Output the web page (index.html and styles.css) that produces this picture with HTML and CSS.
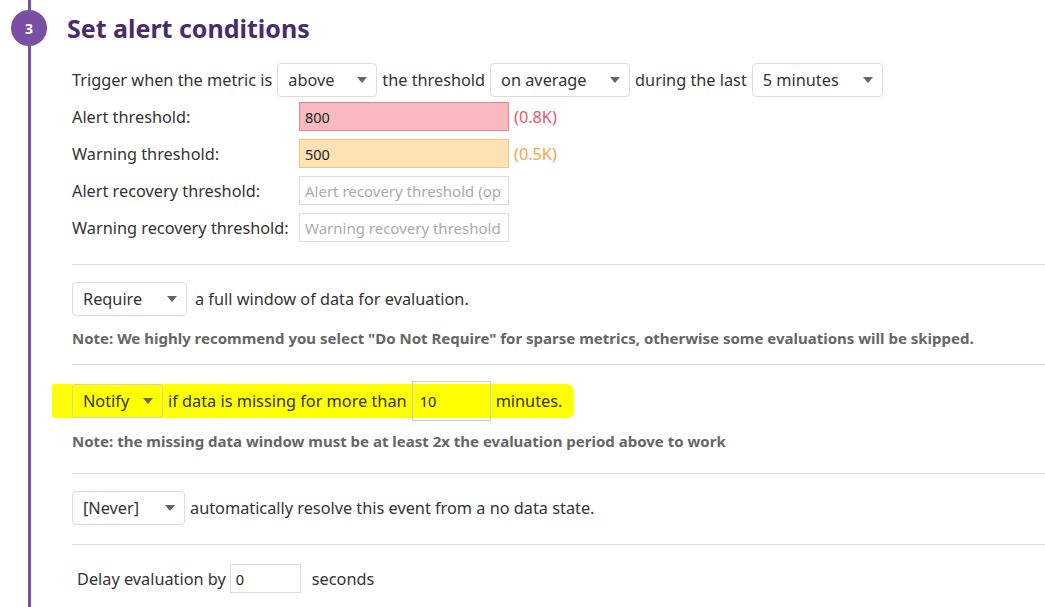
FILE: index.html
```html
<!DOCTYPE html>
<html>
<head>
<meta charset="utf-8">
<link rel="stylesheet" href="styles.css">
</head>
<body>
<div class="step">
  <div class="rail">
    <div class="line line-top"></div>
    <div class="badge">3</div>
    <div class="line line-rest"></div>
  </div>
  <div class="main">
    <div class="header"><h2 class="title">Set alert conditions</h2></div>

    <div class="content">
      <div class="row trigger">
        <span>Trigger when the metric is</span>
        <div class="select w-above"><span>above</span><i class="caret"></i></div>
        <span>the threshold</span>
        <div class="select w-avg"><span>on average</span><i class="caret"></i></div>
        <span>during the last</span>
        <div class="select w-min"><span>5 minutes</span><i class="caret"></i></div>
      </div>

      <div class="thresholds">
        <div class="trow">
          <label class="tlabel">Alert threshold:</label>
          <div class="input alert">800</div>
          <span class="hint alert-hint">(0.8K)</span>
        </div>
        <div class="trow">
          <label class="tlabel">Warning threshold:</label>
          <div class="input warn">500</div>
          <span class="hint warn-hint">(0.5K)</span>
        </div>
        <div class="trow">
          <label class="tlabel">Alert recovery threshold:</label>
          <div class="input empty"><span class="ph">Alert recovery threshold (optional)</span></div>
        </div>
        <div class="trow">
          <label class="tlabel">Warning recovery threshold:</label>
          <div class="input empty"><span class="ph">Warning recovery threshold (optional)</span></div>
        </div>
      </div>

      <div class="section s-require">
        <div class="row">
          <div class="select w-require"><span>Require</span><i class="caret"></i></div>
          <span class="after-wide">a full window of data for evaluation.</span>
        </div>
        <p class="note note1">Note: We highly recommend you select "Do Not Require" for sparse metrics, otherwise some evaluations will be skipped.</p>
      </div>

      <div class="section s-notify">
        <div class="highlight">
          <div class="select w-notify clear"><span>Notify</span><i class="caret"></i></div>
          <span>if data is missing for more than</span>
          <div class="input minutes">10</div>
          <span>minutes.</span>
        </div>
        <p class="note note2">Note: the missing data window must be at least 2x the evaluation period above to work</p>
      </div>

      <div class="section s-never">
        <div class="row">
          <div class="select w-never"><span>[Never]</span><i class="caret"></i></div>
          <span>automatically resolve this event from a no data state.</span>
        </div>
      </div>

      <div class="section s-delay">
        <div class="row delay">
          <span>Delay evaluation by</span>
          <div class="input delay-input">0</div>
          <span class="seconds">seconds</span>
        </div>
      </div>
    </div>
  </div>
</div>
</body>
</html>
```

FILE: styles.css
```css
* { box-sizing: border-box; }
html, body {
  margin: 0;
  padding: 0;
  background: #ffffff;
  height: 607px;
  overflow: hidden;
}
body {
  font-family: "Noto Sans", "Open Sans", sans-serif;
  font-size: 16.3px;
  color: #333333;
}
.step {
  display: grid;
  grid-template-columns: 58px 1fr;
  min-height: 607px;
}
.rail {
  display: flex;
  flex-direction: column;
  align-items: center;
  width: 36px;
  margin-left: 11px;
}
.line {
  width: 3px;
  background: #7a4ea3;
}
.line-top { height: 10px; }
.line-rest { flex: 1; }
.badge {
  width: 36px;
  height: 36px;
  border-radius: 50%;
  background: #7a4ea3;
  color: #ffffff;
  font-weight: 700;
  font-size: 14px;
  display: flex;
  align-items: center;
  justify-content: center;
}
.main { min-width: 0; }
.header {
  height: 56px;
  display: flex;
  align-items: center;
  padding-left: 9px;
}
.title {
  margin: 0;
  font-size: 25px;
  font-weight: 700;
  color: #4a2c6c;
  line-height: 1;
}
.content {
  padding-left: 14px;
  padding-top: 7px;
}
.row {
  display: flex;
  align-items: center;
  gap: 5px;
  white-space: nowrap;
}
.select {
  height: 34px;
  border: 1px solid #dddddd;
  border-radius: 4px;
  background: #ffffff;
  display: flex;
  align-items: center;
  justify-content: space-between;
  padding: 0 9px 0 10px;
  color: #333333;
  flex: none;
}
.select.clear { background: transparent; border-color: #d6d6a0; }
.caret {
  width: 0;
  height: 0;
  border-left: 5.5px solid transparent;
  border-right: 5.5px solid transparent;
  border-top: 6px solid #666666;
}
.w-above { width: 100px; }
.w-avg { width: 140px; }
.w-min { width: 131px; }
.w-require { width: 115px; }
.w-notify { width: 91px; }
.w-never { width: 113px; }
.after-wide { margin-left: 3px; }

.thresholds {
  margin-top: 5px;
  display: flex;
  flex-direction: column;
  gap: 8px;
}
.trow {
  display: flex;
  align-items: center;
  height: 29px;
}
.tlabel { width: 227px; flex: none; }
.input {
  height: 29px;
  width: 210px;
  border: 1px solid #dddddd;
  font-size: 14.5px;
  padding: 0 5px;
  display: flex;
  align-items: center;
  overflow: hidden;
  white-space: nowrap;
  color: #222222;
  flex: none;
}
.input.empty { font-size: 15px; padding-right: 6px; }
.input.alert { background: #f8b9c0; border-color: #e8848f; }
.input.warn { background: #fde3b4; border-color: #f4c57a; }
.ph {
  color: #ababab;
  display: block;
  flex: 1;
  min-width: 0;
  overflow: hidden;
}
.hint { margin-left: 5px; }
.alert-hint { color: #e4566a; }
.warn-hint { color: #f5a640; }

.section {
  border-top: 1px solid #dddddd;
}
.s-require {
  margin-top: 22px;
  padding-top: 17px;
}
.note {
  margin: 0;
  font-size: 15px;
  font-weight: 700;
  color: #666666;
  line-height: 20px;
  white-space: nowrap;
}
.note1 { margin-top: 12px; padding-bottom: 16px; }
.s-notify { padding-top: 19px; }
.highlight {
  display: inline-flex;
  align-items: center;
  gap: 5px;
  height: 34px;
  margin-left: -20px;
  padding: 0 12px 0 20px;
  background: #ffff00;
  border-radius: 3px 8px 6px 2px;
  white-space: nowrap;
}
.input.minutes {
  width: 79px;
  height: 40px;
  margin: -3px 0;
  background: transparent;
  border-color: #cccccc;
  padding-left: 7px;
}
.note2 { margin-top: 13px; padding-bottom: 22px; }
.s-never { padding-top: 17px; padding-bottom: 19px; }
.s-delay { padding-top: 19px; }
.delay { padding-left: 5px; gap: 4px; }
.delay-input { width: 71px; height: 29px; }
.seconds { margin-left: 7px; }
```
